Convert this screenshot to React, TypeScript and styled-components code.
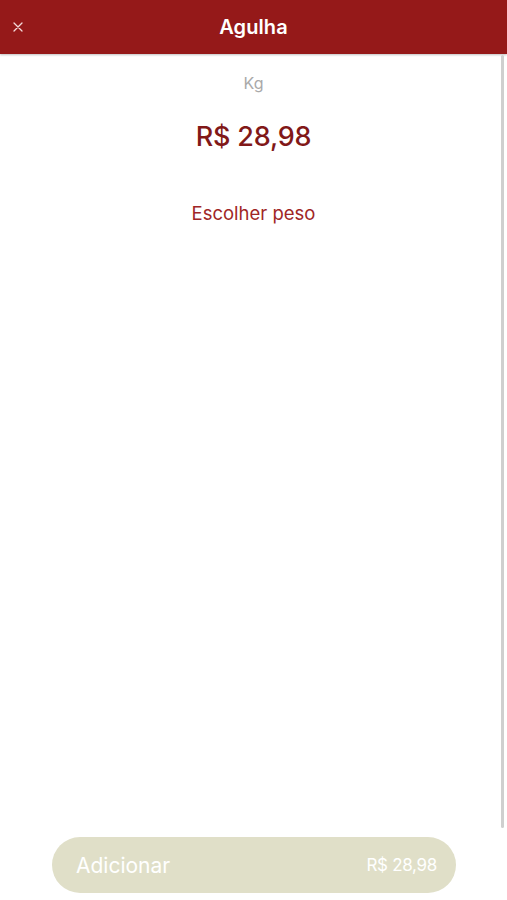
import styled, { createGlobalStyle } from "styled-components";

const GlobalStyle = createGlobalStyle`
  html, body {
    margin: 0;
    padding: 0;
    background: #fff;
    font-family: "Inter", "Noto Sans", sans-serif;
  }
  * {
    box-sizing: border-box;
  }
`;

const Page = styled.div`
  position: relative;
  display: flex;
  flex-direction: column;
  height: 900px;
  overflow: hidden;
`;

const Header = styled.header`
  position: relative;
  display: flex;
  align-items: center;
  justify-content: center;
  height: 54px;
  background-color: #951919;
  box-shadow: 0 1px 2px rgba(0, 0, 0, 0.25);
`;

const CloseBtn = styled.button`
  position: absolute;
  left: 10px;
  top: 50%;
  transform: translateY(-50%);
  width: 16px;
  height: 16px;
  padding: 0;
  border: none;
  background: transparent;
  display: flex;
  align-items: center;
  justify-content: center;
`;

const Title = styled.h1`
  margin: 0;
  color: #fff;
  font-size: 20px;
  font-weight: 600;
  letter-spacing: 0.1px;
`;

const Content = styled.main`
  flex: 1;
  display: flex;
  flex-direction: column;
  align-items: center;
  padding-top: 18px;
`;

const Unit = styled.span`
  color: #a9a9a9;
  font-size: 16px;
  line-height: 22px;
`;

const Price = styled.div`
  margin-top: 26px;
  color: #811818;
  font-size: 27px;
  font-weight: 500;
  line-height: 34px;
  letter-spacing: -0.2px;
`;

const ChooseWeight = styled.button`
  margin-top: 47px;
  padding: 0;
  border: none;
  background: transparent;
  color: #a02626;
  font-family: inherit;
  font-size: 18.5px;
  line-height: 24px;
`;

const Footer = styled.footer`
  padding: 0 51px 7px 52px;
`;

const AddButton = styled.button`
  width: 100%;
  height: 56px;
  display: flex;
  align-items: center;
  justify-content: space-between;
  padding: 0 19px 0 24px;
  border: none;
  border-radius: 28px;
  background-color: #e0dfc8;
  color: #fff;
  font-family: inherit;
`;

const AddLabel = styled.span`
  font-size: 21px;
`;

const AddPrice = styled.span`
  font-size: 17px;
  letter-spacing: -0.3px;
`;

const ScrollThumb = styled.div`
  position: absolute;
  right: 3px;
  top: 55px;
  width: 3px;
  height: 773px;
  border-radius: 2px;
  background: #cfcfcf;
`;

function App() {
  return (
    <>
      <GlobalStyle />
      <Page>
        <Header>
          <CloseBtn aria-label="Fechar">
            <svg width="10" height="10" viewBox="0 0 10 10">
              <path
                d="M1 1 L9 9 M9 1 L1 9"
                stroke="#f3d9d9"
                strokeWidth="1.3"
                strokeLinecap="round"
              />
            </svg>
          </CloseBtn>
          <Title>Agulha</Title>
        </Header>
        <Content>
          <Unit>Kg</Unit>
          <Price>R$ 28,98</Price>
          <ChooseWeight>Escolher peso</ChooseWeight>
        </Content>
        <Footer>
          <AddButton>
            <AddLabel>Adicionar</AddLabel>
            <AddPrice>R$ 28,98</AddPrice>
          </AddButton>
        </Footer>
        <ScrollThumb />
      </Page>
    </>
  );
}

export default App;
